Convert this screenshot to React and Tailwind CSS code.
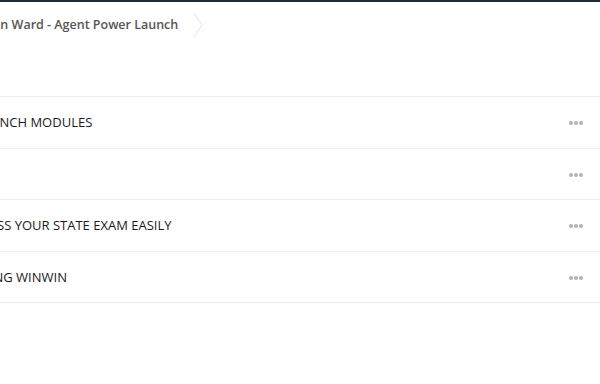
const rows = [
  { title: "LAUNCH MODULES", shift: "-ml-[25px]" },
  { title: "", shift: "" },
  { title: "PASS YOUR STATE EXAM EASILY", shift: "-ml-[19px]" },
  { title: "TRAINING WINWIN", shift: "-ml-[47px]" },
];

const Dots = () => (
  <svg width="14" height="4" viewBox="0 0 14 4" className="text-[#b3b3b3]">
    <circle cx="2" cy="2" r="2" fill="currentColor" />
    <circle cx="7" cy="2" r="2" fill="currentColor" />
    <circle cx="12" cy="2" r="2" fill="currentColor" />
  </svg>
);

const App = () => {
  return (
    <div className="w-[600px] h-[384px] overflow-hidden bg-white font-['Open_Sans',sans-serif]">
      <div className="h-[2px] bg-[#1c2a3d]" />

      <div className="flex items-center h-[46px]">
        <span className="-ml-[24px] text-[12.5px] font-semibold text-[#555] whitespace-nowrap">
          Brian Ward - Agent Power Launch
        </span>
        <svg width="10" height="26" viewBox="0 0 10 26" className="ml-[15px]">
          <path d="M1 1 L9 13 L1 25" fill="none" stroke="#e3e3e3" strokeWidth="1" />
        </svg>
      </div>

      <div className="mt-[48px] border-t border-[#ececec]">
        {rows.map((row, i) => (
          <div
            key={i}
            className="flex items-center justify-between h-[51.5px] border-b border-[#ececec]"
          >
            <span className={`${row.shift} pt-[1px] text-[13px] text-[#1a1a1a] whitespace-nowrap`}>
              {row.title}
            </span>
            <div className="mr-[17px] pt-[2px]">
              <Dots />
            </div>
          </div>
        ))}
      </div>
    </div>
  );
};

export default App;
